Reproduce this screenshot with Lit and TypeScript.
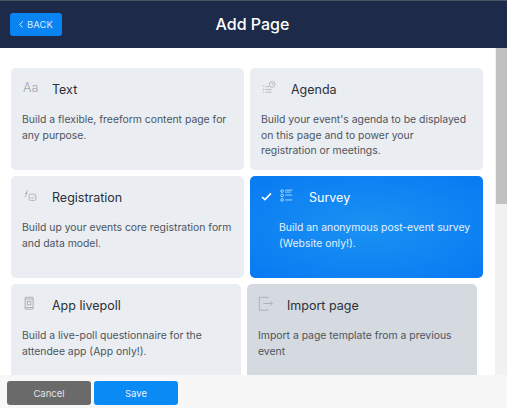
import { LitElement, html, css, svg } from "lit";
import { customElement } from "lit/decorators.js";

const icons: Record<string, unknown> = {
  text: html`<span class="aa">Aa</span>`,
  agenda: svg`<svg class="ic" viewBox="0 0 18 16" fill="none" stroke="currentColor" stroke-width=".8"><circle cx="12.5" cy="4.5" r="3.3"/><path d="M12.5 3v1.6h1.3M2 6.5h1.6M5 7h4M2 10h1.6M5 10.2h7M2 13.2h1.6M5 13.2h7"/></svg>`,
  reg: svg`<svg class="ic" viewBox="0 0 18 16" fill="none" stroke="currentColor" stroke-width=".9"><path d="M3 9.5c.9.2 1.2-.5 1.4-1.6l.7-3.8C5.300 3 5.800 2.400 7 2.600M3.400 5.600h3"/><rect x="8" y="6.500" width="7.600" height="7" rx="1.500"/><path d="M10 10l1.400 1.400 2.400-2.500"/></svg>`,
  survey: svg`<svg class="ic" viewBox="0 0 18 16" fill="none" stroke="currentColor" stroke-width=".9"><circle cx="3.500" cy="3" r="1.500"/><circle cx="3.500" cy="8" r="1.500"/><circle cx="3.500" cy="13" r="1.500"/><path d="M7 2h8M7 4.200h6M7 7.500h8M7 13h8"/></svg>`,
  poll: svg`<svg class="ic" viewBox="0 0 18 16" fill="none" stroke="currentColor" stroke-width="1"><rect x="3.500" y="1" width="9" height="13.500" rx=".8"/><rect x="6" y="5.500" width="4" height="4"/><path d="M3.500 3h9M3.500 12.500h9"/></svg>`,
  imp: svg`<svg class="ic" viewBox="0 0 18 16" fill="none" stroke="currentColor" stroke-width=".9"><path d="M11 2.500V1H1.500v14.500H11V14M6 8h10M13.500 5.500 16 8l-2.500 2.500"/></svg>`,
};

const row = (
  a: [string, string, string, string?],
  b: [string, string, string, string?],
  cls = ""
) => html`<div class="row ${cls}">${[a, b].map(card)}</div>`;

function card([icon, title, desc, state = ""]: [string, string, string, string?]) {
  return html`<div class="card ${state}">
    <div class="head">
      ${state === "sel"
        ? html`<svg class="check" viewBox="0 0 12 10" fill="none" stroke="currentColor" stroke-width="1.700"><path d="M1 5.500 4.200 8.500 11 1.500"/></svg>`
        : ""}
      <span class="icon">${icons[icon]}</span>
      <span class="title">${title}</span>
    </div>
    <p class="desc">${desc}</p>
  </div>`;
}

@customElement("app-root")
export class AppRoot extends LitElement {
  static styles = css`
    :host {
      display: flex;
      flex-direction: column;
      width: 507px;
      height: 408px;
      overflow: hidden;
      font-family: Inter, "Liberation Sans", sans-serif;
      background: #fff;
    }
    header {
      flex: none;
      border-top: 1px solid #4a5163;
      background: #1e2a4a;
      display: flex;
      align-items: center;
      padding: 0 0 0 10px;
      box-sizing: border-box;
      height: 48px;
    }
    .back {
      width: 52px;
      height: 23px;
      margin-top: -1px;
      border-radius: 3px;
      background: #0a84f2;
      color: #dcecff;
      font-size: 9.500px;
      display: flex;
      align-items: center;
      justify-content: center;
      gap: 4px;
    }
    .back svg {
      width: 4px;
      height: 7px;
    }
    h1 {
      flex: 1;
      margin: -2px 0 0;
      padding-right: 64px;
      text-align: center;
      color: #fff;
      font-size: 16px;
      font-weight: 500;
    }
    .body {
      flex: 1;
      min-height: 0;
      display: flex;
      overflow: hidden;
    }
    .list {
      flex: 1;
      padding: 20px 0 0 11px;
      display: flex;
      flex-direction: column;
      gap: 6px;
      overflow: hidden;
    }
    .row {
      display: flex;
      gap: 6px;
      flex: none;
    }
    .card {
      width: 233px;
      height: 102px;
      flex: none;
      box-sizing: border-box;
      border-radius: 5px;
      background: #eaedf1;
      color: #4d545e;
      padding: 12px 11px 0 11px;
    }
    .row.last .card {
      width: 230px;
    }
    .card.dark {
      background: #d5d9e0;
    }
    .card.sel {
      background: radial-gradient(ellipse at center, #1a92f2 0%, #0a7cf3 90%);
      color: #e4f1ff;
    }
    .head {
      height: 18px;
      display: flex;
      align-items: center;
      position: relative;
    }
    .check {
      position: absolute;
      left: 0;
      top: 4px;
      width: 11px;
      height: 9px;
      color: #fff;
    }
    .sel .head {
      padding-left: 18px;
    }
    .icon {
      width: 30px;
      flex: none;
      color: #a2a7ae;
      display: flex;
      margin-top: -3px;
    }
    .dark .icon {
      width: 29px;
    }
    .sel .icon {
      color: #cfe5fd;
    }
    .aa {
      font-size: 12.500px;
      font-weight: 300;
      line-height: 16px;
      color: #a2a7ae;
      padding-left: 1px;
    }
    .ic {
      width: 16px;
      height: 15px;
    }
    .title {
      font-size: 12.500px;
      font-weight: 400;
      color: #2c3037;
    }
    .sel .title {
      color: #fff;
    }
    .desc {
      margin: 14px 0 0;
      font-size: 10.400px;
      line-height: 15.500px;
    }
    .sel .desc {
      padding-left: 18px;
    }
    .track {
      width: 12px;
      flex: none;
      background: #f1f1f1;
    }
    .thumb {
      height: 156px;
      margin-left: 1px;
      background: #c1c1c1;
    }
    footer {
      height: 33px;
      flex: none;
      background: #f7f7f7;
      display: flex;
      gap: 3px;
      padding: 6px 0 0 7px;
      box-sizing: border-box;
    }
    .btn {
      width: 84px;
      height: 24px;
      border-radius: 3px;
      font-size: 9.500px;
      display: flex;
      align-items: center;
      justify-content: center;
    }
    .cancel {
      background: #6a6a6a;
      color: #e4e4e4;
    }
    .save {
      background: #0a8af5;
      color: #e8f4ff;
    }
  `;

  render() {
    return html`
      <header>
        <div class="back">
          <svg viewBox="0 0 4 7" fill="none" stroke="currentColor" stroke-width="1"><path d="M3.500 .5 .8 3.500l2.700 3"/></svg>
          BACK
        </div>
        <h1>Add Page</h1>
      </header>
      <div class="body">
        <div class="list">
          ${row(
            ["text", "Text", "Build a flexible, freeform content page for any purpose."],
            ["agenda", "Agenda", "Build your event's agenda to be displayed on this page and to power your registration or meetings."]
          )}
          ${row(
            ["reg", "Registration", "Build up your events core registration form and data model."],
            ["survey", "Survey", "Build an anonymous post-event survey (Website only!).", "sel"]
          )}
          ${row(
            ["poll", "App livepoll", "Build a live-poll questionnaire for the attendee app (App only!)."],
            ["imp", "Import page", "Import a page template from a previous event", "dark"],
            "last"
          )}
        </div>
        <div class="track"><div class="thumb"></div></div>
      </div>
      <footer>
        <div class="btn cancel">Cancel</div>
        <div class="btn save">Save</div>
      </footer>
    `;
  }
}
